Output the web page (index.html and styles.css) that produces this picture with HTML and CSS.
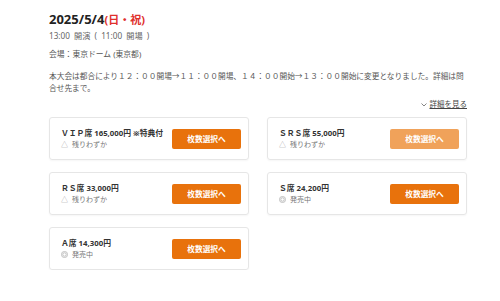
FILE: index.html
```html
<!DOCTYPE html>
<html lang="ja">
  <head>
    <meta charset="UTF-8" />
    <meta name="viewport" content="width=device-width, initial-scale=1.0" />
    <title>公演日程</title>
    <link rel="stylesheet" href="styles.css">
  </head>
  <body>
    <div class="event">
      <h1 class="event-date">2025/5/4<span class="holiday">(日・祝)</span></h1>
      <p class="event-time">13:00 開演 ( 11:00 開場 )</p>
      <p class="event-venue">会場：東京ドーム (東京都)</p>
      <p class="event-note">本大会は都合により１２：００開場→１１：００開場、１４：００開始→１３：００開始に変更となりました。詳細は問合せ先まで。</p>
      <div class="more-row">
        <a class="more-link" href="#">
          <svg class="chevron" width="6" height="4" viewBox="0 0 6 4"><polyline points="0.5,0.5 3,3 5.5,0.5" fill="none" stroke="#666" stroke-width="0.8"/></svg>
          <u>詳細を見る</u>
        </a>
      </div>

      <div class="seat-grid">
        <div class="seat-card">
          <div class="seat-info">
            <div class="seat-name">ＶＩＰ席 165,000円 ※特典付</div>
            <div class="seat-status"><span class="status-icon">△</span>残りわずか</div>
          </div>
          <button class="select-btn">枚数選択へ</button>
        </div>
        <div class="seat-card">
          <div class="seat-info">
            <div class="seat-name">ＳＲＳ席 55,000円</div>
            <div class="seat-status"><span class="status-icon">△</span>残りわずか</div>
          </div>
          <button class="select-btn light">枚数選択へ</button>
        </div>
        <div class="seat-card">
          <div class="seat-info">
            <div class="seat-name">ＲＳ席 33,000円</div>
            <div class="seat-status"><span class="status-icon">△</span>残りわずか</div>
          </div>
          <button class="select-btn">枚数選択へ</button>
        </div>
        <div class="seat-card">
          <div class="seat-info">
            <div class="seat-name">Ｓ席 24,200円</div>
            <div class="seat-status">
              <svg class="status-icon" width="7" height="7" viewBox="0 0 8 8"><circle cx="4" cy="4" r="3.5" fill="none" stroke="#aaa" stroke-width="0.8"/><circle cx="4" cy="4" r="2" fill="none" stroke="#aaa" stroke-width="0.8"/></svg>発売中
            </div>
          </div>
          <button class="select-btn">枚数選択へ</button>
        </div>
        <div class="seat-card">
          <div class="seat-info">
            <div class="seat-name">Ａ席 14,300円</div>
            <div class="seat-status">
              <svg class="status-icon" width="7" height="7" viewBox="0 0 8 8"><circle cx="4" cy="4" r="3.5" fill="none" stroke="#aaa" stroke-width="0.8"/><circle cx="4" cy="4" r="2" fill="none" stroke="#aaa" stroke-width="0.8"/></svg>発売中
            </div>
          </div>
          <button class="select-btn">枚数選択へ</button>
        </div>
      </div>
    </div>
  </body>
</html>
```

FILE: styles.css
```css
* {
  margin: 0;
  padding: 0;
  box-sizing: border-box;
}
body {
  font-family: "Noto Sans", "Noto Sans CJK JP", sans-serif;
  color: #333;
  background: #fff;
}
.event {
  width: 418px;
  margin-left: 49px;
  padding-top: 10px;
}
.event-date {
  font-size: 13px;
  font-weight: 700;
  line-height: 18px;
  color: #222;
}
.holiday {
  color: #e0302c;
  font-size: 11px;
}
.event-time {
  font-size: 8.2px;
  line-height: 11px;
  word-spacing: 2px;
  color: #666;
  margin-top: 1px;
}
.event-venue {
  font-size: 7.8px;
  line-height: 11px;
  color: #555;
  margin-top: 8px;
}
.event-note {
  font-size: 7.7px;
  line-height: 11.5px;
  color: #555;
  margin-top: 11px;
}
.more-row {
  display: flex;
  justify-content: flex-end;
  margin-top: 5px;
}
.more-link {
  font-size: 7.5px;
  line-height: 11px;
  color: #444;
  text-decoration: none;
  display: flex;
  align-items: center;
  gap: 3px;
}
.seat-grid {
  display: grid;
  grid-template-columns: 200px 200px;
  column-gap: 18px;
  row-gap: 12px;
  margin-top: 7px;
}
.seat-card {
  height: 43px;
  border: 1px solid #e6e6e6;
  border-radius: 3px;
  box-shadow: 0 1px 2px rgba(0, 0, 0, 0.04);
  display: flex;
  align-items: center;
  justify-content: space-between;
  padding: 0 7px 0 11px;
}
.seat-name {
  font-size: 7.8px;
  font-weight: 700;
  line-height: 11px;
  color: #333;
}
.seat-status {
  font-size: 7px;
  line-height: 11px;
  color: #777;
  display: flex;
  align-items: center;
}
.status-icon {
  font-size: 7px;
  color: #999;
  margin-right: 4px;
}
.select-btn {
  width: 69px;
  height: 20px;
  border: none;
  border-radius: 2px;
  background: #e8720c;
  color: #fff;
  font-family: inherit;
  font-size: 7.7px;
  font-weight: 700;
  cursor: pointer;
}
.select-btn.light {
  background: #f0a25a;
}
```
